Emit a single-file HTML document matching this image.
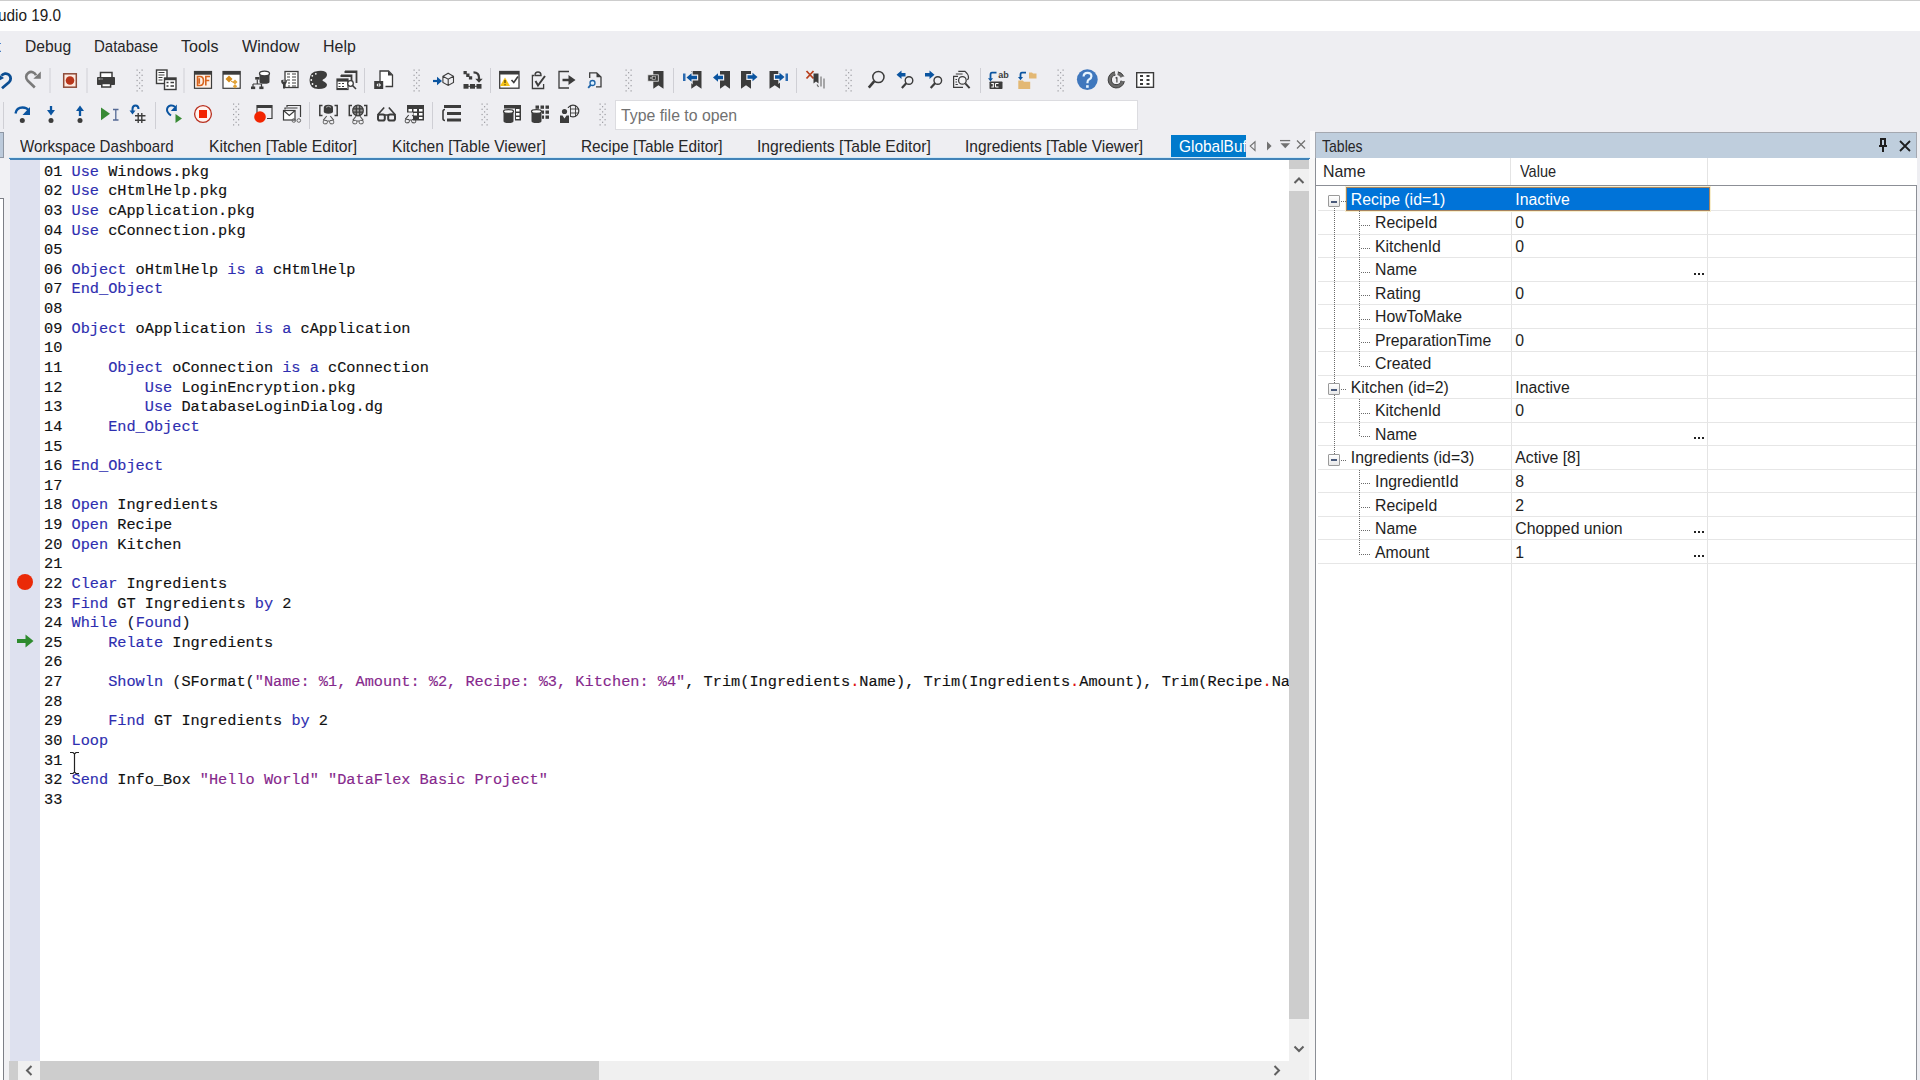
<!DOCTYPE html>
<html><head><meta charset="utf-8"><style>
*{box-sizing:border-box;margin:0;padding:0}
html,body{width:1920px;height:1080px;overflow:hidden;background:#eeeef2;font-family:"Liberation Sans",sans-serif;color:#1e1e1e;position:relative}
.a{position:absolute}
.u{position:absolute;white-space:pre;font-size:16.6px;line-height:30px;transform-origin:0 0;color:#262628}
.code{position:absolute;left:44px;white-space:pre;font-family:"Liberation Mono",monospace;font-size:15.27px;line-height:19.63px;color:#111;-webkit-text-stroke:0.15px currentColor}
.k{color:#2e2eb0}.s{color:#86288c}.d{color:#e01010}
.row{position:absolute;left:1318px;width:598px;height:1px;background:#e6e6e6}
.tn{position:absolute;white-space:pre;font-size:15.8px;line-height:30px;color:#1e1e1e}
.dotv{position:absolute;width:1px;background:repeating-linear-gradient(to bottom,#6a6a6a 0 1px,transparent 1px 2px)}
.doth{position:absolute;height:1px;background:repeating-linear-gradient(to right,#6a6a6a 0 1px,transparent 1px 2px)}
</style></head><body>
<div class="a" style="left:0;top:0;width:1920px;height:31px;background:#fff;border-top:1px solid #cdcdcd"></div>
<div class="u" style="left:-2.42px;top:0.80px;transform:scaleX(0.9239);color:#1a1a1a">udio 19.0</div>
<div class="u" style="left:-3.50px;top:32.40px;transform:scaleX(0.8000);color:#262628">t</div>
<div class="u" style="left:24.86px;top:32.40px;transform:scaleX(0.9426);color:#262628">Debug</div>
<div class="u" style="left:94.10px;top:32.40px;transform:scaleX(0.9029);color:#262628">Database</div>
<div class="u" style="left:180.90px;top:32.40px;transform:scaleX(0.9658);color:#262628">Tools</div>
<div class="u" style="left:242.30px;top:32.40px;transform:scaleX(0.9746);color:#262628">Window</div>
<div class="u" style="left:323.04px;top:32.40px;transform:scaleX(0.9606);color:#262628">Help</div>
<svg class="a" style="left:0;top:60px" width="1200" height="75" viewBox="0 60 1200 75"><rect x="49.5" y="68" width="1" height="25" fill="#cfcfd5"/><rect x="86.5" y="68" width="1" height="25" fill="#cfcfd5"/><rect x="183.5" y="68" width="1" height="25" fill="#cfcfd5"/><rect x="364.0" y="68" width="1" height="25" fill="#cfcfd5"/><rect x="490.0" y="68" width="1" height="25" fill="#cfcfd5"/><rect x="673.0" y="68" width="1" height="25" fill="#cfcfd5"/><rect x="796.0" y="68" width="1" height="25" fill="#cfcfd5"/><rect x="980.0" y="68" width="1" height="25" fill="#cfcfd5"/><rect x="3.0" y="102" width="1" height="27" fill="#cfcfd5"/><rect x="155.0" y="102" width="1" height="27" fill="#cfcfd5"/><rect x="309.0" y="102" width="1" height="27" fill="#cfcfd5"/><rect x="432.0" y="102" width="1" height="27" fill="#cfcfd5"/><rect x="136.5" y="69.5" width="1.2" height="1.2" fill="#9a9aa0"/><rect x="141.5" y="69.5" width="1.2" height="1.2" fill="#9a9aa0"/><rect x="136.5" y="74.7" width="1.2" height="1.2" fill="#9a9aa0"/><rect x="141.5" y="74.7" width="1.2" height="1.2" fill="#9a9aa0"/><rect x="136.5" y="79.9" width="1.2" height="1.2" fill="#9a9aa0"/><rect x="141.5" y="79.9" width="1.2" height="1.2" fill="#9a9aa0"/><rect x="136.5" y="85.1" width="1.2" height="1.2" fill="#9a9aa0"/><rect x="141.5" y="85.1" width="1.2" height="1.2" fill="#9a9aa0"/><rect x="136.5" y="90.3" width="1.2" height="1.2" fill="#9a9aa0"/><rect x="141.5" y="90.3" width="1.2" height="1.2" fill="#9a9aa0"/><rect x="139.0" y="72.1" width="1.2" height="1.2" fill="#9a9aa0"/><rect x="139.0" y="77.3" width="1.2" height="1.2" fill="#9a9aa0"/><rect x="139.0" y="82.5" width="1.2" height="1.2" fill="#9a9aa0"/><rect x="139.0" y="87.69999999999999" width="1.2" height="1.2" fill="#9a9aa0"/><rect x="413.5" y="69.5" width="1.2" height="1.2" fill="#9a9aa0"/><rect x="418.5" y="69.5" width="1.2" height="1.2" fill="#9a9aa0"/><rect x="413.5" y="74.7" width="1.2" height="1.2" fill="#9a9aa0"/><rect x="418.5" y="74.7" width="1.2" height="1.2" fill="#9a9aa0"/><rect x="413.5" y="79.9" width="1.2" height="1.2" fill="#9a9aa0"/><rect x="418.5" y="79.9" width="1.2" height="1.2" fill="#9a9aa0"/><rect x="413.5" y="85.1" width="1.2" height="1.2" fill="#9a9aa0"/><rect x="418.5" y="85.1" width="1.2" height="1.2" fill="#9a9aa0"/><rect x="413.5" y="90.3" width="1.2" height="1.2" fill="#9a9aa0"/><rect x="418.5" y="90.3" width="1.2" height="1.2" fill="#9a9aa0"/><rect x="416.0" y="72.1" width="1.2" height="1.2" fill="#9a9aa0"/><rect x="416.0" y="77.3" width="1.2" height="1.2" fill="#9a9aa0"/><rect x="416.0" y="82.5" width="1.2" height="1.2" fill="#9a9aa0"/><rect x="416.0" y="87.69999999999999" width="1.2" height="1.2" fill="#9a9aa0"/><rect x="625.5" y="69.5" width="1.2" height="1.2" fill="#9a9aa0"/><rect x="630.5" y="69.5" width="1.2" height="1.2" fill="#9a9aa0"/><rect x="625.5" y="74.7" width="1.2" height="1.2" fill="#9a9aa0"/><rect x="630.5" y="74.7" width="1.2" height="1.2" fill="#9a9aa0"/><rect x="625.5" y="79.9" width="1.2" height="1.2" fill="#9a9aa0"/><rect x="630.5" y="79.9" width="1.2" height="1.2" fill="#9a9aa0"/><rect x="625.5" y="85.1" width="1.2" height="1.2" fill="#9a9aa0"/><rect x="630.5" y="85.1" width="1.2" height="1.2" fill="#9a9aa0"/><rect x="625.5" y="90.3" width="1.2" height="1.2" fill="#9a9aa0"/><rect x="630.5" y="90.3" width="1.2" height="1.2" fill="#9a9aa0"/><rect x="628.0" y="72.1" width="1.2" height="1.2" fill="#9a9aa0"/><rect x="628.0" y="77.3" width="1.2" height="1.2" fill="#9a9aa0"/><rect x="628.0" y="82.5" width="1.2" height="1.2" fill="#9a9aa0"/><rect x="628.0" y="87.69999999999999" width="1.2" height="1.2" fill="#9a9aa0"/><rect x="845.5" y="69.5" width="1.2" height="1.2" fill="#9a9aa0"/><rect x="850.5" y="69.5" width="1.2" height="1.2" fill="#9a9aa0"/><rect x="845.5" y="74.7" width="1.2" height="1.2" fill="#9a9aa0"/><rect x="850.5" y="74.7" width="1.2" height="1.2" fill="#9a9aa0"/><rect x="845.5" y="79.9" width="1.2" height="1.2" fill="#9a9aa0"/><rect x="850.5" y="79.9" width="1.2" height="1.2" fill="#9a9aa0"/><rect x="845.5" y="85.1" width="1.2" height="1.2" fill="#9a9aa0"/><rect x="850.5" y="85.1" width="1.2" height="1.2" fill="#9a9aa0"/><rect x="845.5" y="90.3" width="1.2" height="1.2" fill="#9a9aa0"/><rect x="850.5" y="90.3" width="1.2" height="1.2" fill="#9a9aa0"/><rect x="848.0" y="72.1" width="1.2" height="1.2" fill="#9a9aa0"/><rect x="848.0" y="77.3" width="1.2" height="1.2" fill="#9a9aa0"/><rect x="848.0" y="82.5" width="1.2" height="1.2" fill="#9a9aa0"/><rect x="848.0" y="87.69999999999999" width="1.2" height="1.2" fill="#9a9aa0"/><rect x="1057.5" y="69.5" width="1.2" height="1.2" fill="#9a9aa0"/><rect x="1062.5" y="69.5" width="1.2" height="1.2" fill="#9a9aa0"/><rect x="1057.5" y="74.7" width="1.2" height="1.2" fill="#9a9aa0"/><rect x="1062.5" y="74.7" width="1.2" height="1.2" fill="#9a9aa0"/><rect x="1057.5" y="79.9" width="1.2" height="1.2" fill="#9a9aa0"/><rect x="1062.5" y="79.9" width="1.2" height="1.2" fill="#9a9aa0"/><rect x="1057.5" y="85.1" width="1.2" height="1.2" fill="#9a9aa0"/><rect x="1062.5" y="85.1" width="1.2" height="1.2" fill="#9a9aa0"/><rect x="1057.5" y="90.3" width="1.2" height="1.2" fill="#9a9aa0"/><rect x="1062.5" y="90.3" width="1.2" height="1.2" fill="#9a9aa0"/><rect x="1060.0" y="72.1" width="1.2" height="1.2" fill="#9a9aa0"/><rect x="1060.0" y="77.3" width="1.2" height="1.2" fill="#9a9aa0"/><rect x="1060.0" y="82.5" width="1.2" height="1.2" fill="#9a9aa0"/><rect x="1060.0" y="87.69999999999999" width="1.2" height="1.2" fill="#9a9aa0"/><rect x="233" y="103.5" width="1.2" height="1.2" fill="#9a9aa0"/><rect x="238" y="103.5" width="1.2" height="1.2" fill="#9a9aa0"/><rect x="233" y="108.7" width="1.2" height="1.2" fill="#9a9aa0"/><rect x="238" y="108.7" width="1.2" height="1.2" fill="#9a9aa0"/><rect x="233" y="113.9" width="1.2" height="1.2" fill="#9a9aa0"/><rect x="238" y="113.9" width="1.2" height="1.2" fill="#9a9aa0"/><rect x="233" y="119.1" width="1.2" height="1.2" fill="#9a9aa0"/><rect x="238" y="119.1" width="1.2" height="1.2" fill="#9a9aa0"/><rect x="233" y="124.3" width="1.2" height="1.2" fill="#9a9aa0"/><rect x="238" y="124.3" width="1.2" height="1.2" fill="#9a9aa0"/><rect x="235.5" y="106.1" width="1.2" height="1.2" fill="#9a9aa0"/><rect x="235.5" y="111.3" width="1.2" height="1.2" fill="#9a9aa0"/><rect x="235.5" y="116.5" width="1.2" height="1.2" fill="#9a9aa0"/><rect x="235.5" y="121.69999999999999" width="1.2" height="1.2" fill="#9a9aa0"/><rect x="481.5" y="103.5" width="1.2" height="1.2" fill="#9a9aa0"/><rect x="486.5" y="103.5" width="1.2" height="1.2" fill="#9a9aa0"/><rect x="481.5" y="108.7" width="1.2" height="1.2" fill="#9a9aa0"/><rect x="486.5" y="108.7" width="1.2" height="1.2" fill="#9a9aa0"/><rect x="481.5" y="113.9" width="1.2" height="1.2" fill="#9a9aa0"/><rect x="486.5" y="113.9" width="1.2" height="1.2" fill="#9a9aa0"/><rect x="481.5" y="119.1" width="1.2" height="1.2" fill="#9a9aa0"/><rect x="486.5" y="119.1" width="1.2" height="1.2" fill="#9a9aa0"/><rect x="481.5" y="124.3" width="1.2" height="1.2" fill="#9a9aa0"/><rect x="486.5" y="124.3" width="1.2" height="1.2" fill="#9a9aa0"/><rect x="484.0" y="106.1" width="1.2" height="1.2" fill="#9a9aa0"/><rect x="484.0" y="111.3" width="1.2" height="1.2" fill="#9a9aa0"/><rect x="484.0" y="116.5" width="1.2" height="1.2" fill="#9a9aa0"/><rect x="484.0" y="121.69999999999999" width="1.2" height="1.2" fill="#9a9aa0"/><rect x="599.5" y="103.5" width="1.2" height="1.2" fill="#9a9aa0"/><rect x="604.5" y="103.5" width="1.2" height="1.2" fill="#9a9aa0"/><rect x="599.5" y="108.7" width="1.2" height="1.2" fill="#9a9aa0"/><rect x="604.5" y="108.7" width="1.2" height="1.2" fill="#9a9aa0"/><rect x="599.5" y="113.9" width="1.2" height="1.2" fill="#9a9aa0"/><rect x="604.5" y="113.9" width="1.2" height="1.2" fill="#9a9aa0"/><rect x="599.5" y="119.1" width="1.2" height="1.2" fill="#9a9aa0"/><rect x="604.5" y="119.1" width="1.2" height="1.2" fill="#9a9aa0"/><rect x="599.5" y="124.3" width="1.2" height="1.2" fill="#9a9aa0"/><rect x="604.5" y="124.3" width="1.2" height="1.2" fill="#9a9aa0"/><rect x="602.0" y="106.1" width="1.2" height="1.2" fill="#9a9aa0"/><rect x="602.0" y="111.3" width="1.2" height="1.2" fill="#9a9aa0"/><rect x="602.0" y="116.5" width="1.2" height="1.2" fill="#9a9aa0"/><rect x="602.0" y="121.69999999999999" width="1.2" height="1.2" fill="#9a9aa0"/><path d="M2 88.3 L9 82.3 A5 5 0 1 0 1.5 75.8" stroke="#0b4d92" stroke-width="2.8" fill="none"/><path d="M-2.5 73.5 L4 78 L-2.5 81.5 Z" fill="#0b4d92"/><path d="M34.8 87.5 L27.8 80.8 A5.1 5.1 0 1 1 36 75.2" stroke="#7a7a7a" stroke-width="2.6" fill="none"/><path d="M40.8 71.5 L40.8 78.8 L33.3 78.8 Z" fill="#7a7a7a"/><rect x="63.7" y="73.8" width="12.6" height="13.4" fill="#fde9df" stroke="#8e4a38" stroke-width="1.5"/><circle cx="70" cy="80.5" r="4.3" fill="#b8351a"/><rect x="100.5" y="72.5" width="11.5" height="5.5" fill="#fff" stroke="#3c3c3c" stroke-width="1.5"/><rect x="97" y="77" width="18" height="8" rx="0.8" fill="#3c3c3c"/><rect x="101.8" y="83.5" width="8.8" height="3.5" fill="#fff" stroke="#3c3c3c" stroke-width="1.5"/><rect x="98.5" y="78.5" width="2" height="1" fill="#ddd"/><rect x="101.5" y="78.5" width="1" height="1" fill="#ddd"/><rect x="156.5" y="70" width="10.5" height="13.5" fill="#fff" stroke="#3c3c3c" stroke-width="1.4"/><path d="M158.5 72.5h6M158.5 75h6M158.5 77.5h4M158.5 80h4" stroke="#3c3c3c" stroke-width="1"/><rect x="164.5" y="78" width="11.5" height="11.5" fill="#fff" stroke="#3c3c3c" stroke-width="1.4"/><rect x="164.5" y="78" width="11.5" height="2.2" fill="#3c3c3c"/><path d="M166.5 82.5h2M170.5 82.5h3.5M166.5 86h2M170.5 86h3.5" stroke="#3c3c3c" stroke-width="1.6"/><rect x="194.5" y="71.5" width="17" height="16.8" fill="#fdf1e8" stroke="#3c3c3c" stroke-width="1.2"/><rect x="194.5" y="71.5" width="17" height="3.2" fill="#3c3c3c"/><path d="M197.5 76.5h2.5q3.5 0 3.5 4.5t-3.5 4.5h-2.5zM199.3 78.3v5.4" fill="none" stroke="#d8641e" stroke-width="1.6"/><path d="M205 76.5h5M205.8 76.5v9M205.8 80.5h3.5" fill="none" stroke="#d8641e" stroke-width="1.6"/><rect x="223" y="71.5" width="17.2" height="16.8" fill="#fff" stroke="#3c3c3c" stroke-width="1.2"/><rect x="223" y="71.5" width="17.2" height="3.2" fill="#3c3c3c"/><path d="M229 75.5l3.5 3.5-3.5 3.5-3.5-3.5z" fill="#d48c1c"/><path d="M235 79.5l2.5 2.5-2.5 2.5-2.5-2.5zM235 84l2.2 2.2-2.2 2.2-2.2-2.2z" fill="#e2a43a"/><path d="M231 81l2.5 1.5" stroke="#d48c1c" stroke-width="1"/><path d="M259.5 73.5v8.5q0 1.8 5 1.8t5-1.8v-8.5" fill="#3c3c3c"/><ellipse cx="264.5" cy="73.5" rx="5" ry="2.3" fill="#fff" stroke="#3c3c3c" stroke-width="1.3"/><rect x="255.2" y="77" width="4.3" height="2.6" fill="#3c3c3c"/><path d="M257.3 79.5v4.2M253 84h8.7M253 84v3M261.5 84v3" stroke="#3c3c3c" stroke-width="1.2" fill="none"/><rect x="251" y="86.5" width="4.2" height="2.6" fill="#3c3c3c"/><rect x="259.3" y="86.5" width="4.2" height="2.6" fill="#3c3c3c"/><rect x="285" y="71.5" width="13" height="16" fill="#fff" stroke="#3c3c3c" stroke-width="1.3"/><path d="M287 74h3M292 74h4M287 77h3M292 77h4M287 80h3M292 80h4M288 83h2M292 83h4M288 86h2M292 86h4" stroke="#3c3c3c" stroke-width="1.2"/><path d="M281 80.5q0 3 2 4v4h2v-4q2-1 2-4l-1.5-1v2.5h-2v-2.5z" fill="#3c3c3c"/><path d="M318 71q8.5-1 9 3.5q0 3-4 5q-1.2.8 0 1.6q4 1.8 4 4q-.5 4-8.5 4q-9 0-9-9q0-8.5 8.5-9.1z" fill="#3c3c3c"/><circle cx="315.8" cy="73.8" r="0.9" fill="#fff"/><circle cx="312.3" cy="75.8" r="0.9" fill="#fff"/><circle cx="311.3" cy="80" r="0.9" fill="#fff"/><circle cx="312.5" cy="84" r="0.9" fill="#fff"/><circle cx="316" cy="86" r="0.9" fill="#fff"/><path d="M345 71.5h11.5v11.5M341 75.5h10.5v7" fill="none" stroke="#3c3c3c" stroke-width="1.8"/><path d="M344.5 71h12v2h-12zM340.5 75h11v2h-11z" fill="#3c3c3c"/><rect x="337" y="79" width="11" height="10.5" fill="#fff" stroke="#3c3c3c" stroke-width="1.2"/><rect x="337" y="79" width="11" height="2.6" fill="#3c3c3c"/><path d="M338.5 83.5h2M342 83.5h2M338.5 86.5h2M342 86.5h2M337 88.5h10" stroke="#3c3c3c" stroke-width="1.2"/><circle cx="350.5" cy="83.5" r="2.8" fill="#fff" stroke="#3c3c3c" stroke-width="1.3"/><path d="M352.5 85.5l3.5 3.5" stroke="#3c3c3c" stroke-width="1.6"/><path d="M380 81v-10h8.5l4 4v11.5h-7" fill="#fff" stroke="#3c3c3c" stroke-width="1.3"/><path d="M388 71v4.5h4.5z" fill="#3c3c3c"/><rect x="374.2" y="81" width="9" height="8" fill="#3c3c3c"/><path d="M376.5 85l1.8-2v4zM381 85l-1.8-2v4z" fill="#fff"/><path d="M433 81h5" stroke="#0a54a0" stroke-width="2.2"/><path d="M437 76.8l5 4.2-5 4.2z" fill="#0a54a0"/><path d="M448.2 73.2l5.3 3v6.2l-5.3 3-5.3-3v-6.2zM442.9 76.2l5.3 3 5.3-3M448.2 79.2v6.2" fill="none" stroke="#3c3c3c" stroke-width="1.1"/><path d="M463.5 71h3.3v3.3h-3.3zM466.2 73.6h3.3v3.3h-3.3zM468.9 76.2h3.3v3.3h-3.3z" fill="#3c3c3c"/><path d="M473.5 72.3q5.5 0 5.5 5.5v2" fill="none" stroke="#3c3c3c" stroke-width="2.2"/><path d="M475.3 78.8h7.4l-3.7 4z" fill="#3c3c3c"/><rect x="463.5" y="84" width="5" height="4.7" fill="#3c3c3c"/><rect x="470" y="84" width="5" height="4.7" fill="#3c3c3c"/><rect x="476.5" y="84" width="5" height="4.7" fill="#3c3c3c"/><path d="M468 86.3h9" stroke="#3c3c3c" stroke-width="1"/><rect x="499.7" y="71.5" width="19.3" height="16.7" fill="#fff" stroke="#3c3c3c" stroke-width="1.3"/><rect x="499.7" y="71.5" width="19.3" height="3" fill="#3c3c3c"/><path d="M505 77.5l5 8.5h-10z" fill="#f4c21a"/><path d="M505 80v3M505 84.2v1" stroke="#3a2a00" stroke-width="1.1"/><path d="M511.5 80l2.3 2.5 4.2-6" fill="none" stroke="#3c3c3c" stroke-width="1.6"/><path d="M534 75.5h-1.6v13h11.2v-4.5M532.4 75.5" fill="none" stroke="#3c3c3c" stroke-width="1.3"/><path d="M535 75.5q0-3.5 3-3.5t3 3.5z" fill="none" stroke="#3c3c3c" stroke-width="1.4"/><path d="M535.5 81l2.5 4.5 7-9.5" fill="none" stroke="#3c3c3c" stroke-width="2"/><path d="M569 71.5h-10v16.5h10" fill="none" stroke="#3c3c3c" stroke-width="1.3"/><path d="M562.5 80h7" stroke="#3c3c3c" stroke-width="2.5"/><path d="M568.5 75l7 5-7 5z" fill="#3c3c3c"/><path d="M589.7 78v-5.2h7l4.3 4.3v9.8h-5" fill="none" stroke="#3c3c3c" stroke-width="1.3"/><path d="M596.5 72.8v4.5h4.5z" fill="#3c3c3c"/><circle cx="592.5" cy="83" r="2.5" fill="#dff2ff" stroke="#1f64a8" stroke-width="1.3"/><path d="M590.8 84.8l-2.6 3" stroke="#1f64a8" stroke-width="1.8"/><path d="M653.3 71h10.200000000000045v17.75l-5.100000000000023 -3.5l-5.100000000000023 3.5z" fill="#3c3c3c"/><rect x="647.8" y="74.8" width="10.5" height="6.4" fill="#3c3c3c" stroke="#e8e8ea" stroke-width="0.8"/><path d="M650 78l1.5-1.5v3z" fill="#ddd"/><rect x="652.5" y="76.5" width="3" height="3" fill="none" stroke="#ccc" stroke-width="0.6"/><path d="M691.3 71h10.200000000000045v17.75l-5.100000000000023 -3.5l-5.100000000000023 3.5z" fill="#3c3c3c"/><path d="M686.5 77.5l5 -4.3v2.6h5.5v3.4h-5.5v2.6z" fill="#eeeef2" stroke="#eeeef2" stroke-width="2.4"/><path d="M686.5 77.5l5 -4.3v2.6h5.5v3.4h-5.5v2.6z" fill="#0a54a0"/><rect x="683" y="73.5" width="2.5" height="7.5" fill="#2a6ab0"/><path d="M720 71h10v17.75l-5.0 -3.5l-5.0 3.5z" fill="#3c3c3c"/><path d="M713 77.5l5 -4.3v2.6h5v3.4h-5v2.6z" fill="#eeeef2" stroke="#eeeef2" stroke-width="2.4"/><path d="M713 77.5l5 -4.3v2.6h5v3.4h-5v2.6z" fill="#0a54a0"/><path d="M741 71h10v17.75l-5.0 -3.5l-5.0 3.5z" fill="#3c3c3c"/><path d="M757.5 77l-5 -4.3v2.6h-5.0v3.4h5.0v2.6z" fill="#eeeef2" stroke="#eeeef2" stroke-width="2.4"/><path d="M757.5 77l-5 -4.3v2.6h-5.0v3.4h5.0v2.6z" fill="#0a54a0"/><path d="M769.5 71h10.5v17.75l-5.25 -3.5l-5.25 3.5z" fill="#3c3c3c"/><path d="M784.5 77l-5 -4.3v2.6h-4.5v3.4h4.5v2.6z" fill="#eeeef2" stroke="#eeeef2" stroke-width="2.4"/><path d="M784.5 77l-5 -4.3v2.6h-4.5v3.4h4.5v2.6z" fill="#0a54a0"/><rect x="785.5" y="73.5" width="2.5" height="7.5" fill="#2a6ab0"/><path d="M806.5 71l7 7.5M813.5 71l-7 7.5" stroke="#b8401e" stroke-width="1.8"/><path d="M813.5 73.5h5v10l-2.5-2-2.5 2z" fill="#3c3c3c"/><path d="M821 76.5v10M824 78.5v10" stroke="#777" stroke-width="1.2"/><path d="M817 84.5l1.5 2.5" stroke="#666" stroke-width="1.2"/><circle cx="878.4" cy="77" r="5.6" fill="none" stroke="#3c3c3c" stroke-width="1.5"/><path d="M874.3 81.2l-5.5 6.5" stroke="#3c3c3c" stroke-width="2.6"/><path d="M896.5 74.7l5 -4.3v2.6h4.0v3.4h-4.0v2.6z" fill="#eeeef2" stroke="#eeeef2" stroke-width="2.4"/><path d="M896.5 74.7l5 -4.3v2.6h4.0v3.4h-4.0v2.6z" fill="#0a54a0"/><circle cx="909" cy="80.5" r="3.8" fill="none" stroke="#3c3c3c" stroke-width="1.4"/><path d="M906.2 83.3l-4.3 4.8" stroke="#3c3c3c" stroke-width="2.2"/><path d="M934.5 74.7l-5 -4.3v2.6h-4.5v3.4h4.5v2.6z" fill="#eeeef2" stroke="#eeeef2" stroke-width="2.4"/><path d="M934.5 74.7l-5 -4.3v2.6h-4.5v3.4h4.5v2.6z" fill="#0a54a0"/><circle cx="937.8" cy="80.5" r="3.8" fill="none" stroke="#3c3c3c" stroke-width="1.4"/><path d="M935.0 83.3l-4.3 4.8" stroke="#3c3c3c" stroke-width="2.2"/><path d="M958.3 71.4h6.7q3.5 3 3.5 6q0 1.5-1.2 2.5M955.8 74h6.8M958 76.3h-4.4v11.1h9.4" fill="none" stroke="#3c3c3c" stroke-width="1.2"/><path d="M955.5 79.5h1.5M955.5 82h1.5M955.5 84.5h2.3" stroke="#3c3c3c" stroke-width="1"/><circle cx="962.4" cy="80.4" r="3.8" fill="#f4f4f6" stroke="#3c3c3c" stroke-width="1.3"/><path d="M965.3 83.4l4.3 4.8" stroke="#3c3c3c" stroke-width="2"/><path d="M996.5 72.7h-4.5q-1.5 0-1.5 2v4" fill="none" stroke="#0a54a0" stroke-width="1.8"/><path d="M988 78.2h5l-2.5 3.2z" fill="#0a54a0"/><text x="998.3" y="77.5" style="font-family:'Liberation Sans';font-weight:bold;font-size:9px" fill="#3c3c3c">ab</text><rect x="989.5" y="81.5" width="13" height="7.5" rx="0.8" fill="#3c3c3c"/><path d="M991.3 83.5h2v3.5h-2M995.5 83.5h3M995.5 87h3M995.5 83.5v3.5" fill="none" stroke="#fff" stroke-width="1.1"/><path d="M1026 72.7h-4q-1.5 0-1.5 2v3" fill="none" stroke="#0a54a0" stroke-width="1.8"/><path d="M1018 77h5l-2.5 3.2z" fill="#0a54a0"/><path d="M1029 72.5h3l1 1h3.5v5h-7.5z" fill="#e3b874"/><path d="M1018.3 80.5h4.5l1.2 1.2h6.2v7.2h-11.9z" fill="#e3b874"/><circle cx="1087.3" cy="79.6" r="10.4" fill="#3f77bd"/><path d="M1083.6 76.4q0-3.6 3.9-3.6t3.9 3.4q0 2-2.4 3.2q-1.5.8-1.5 3v.8" fill="none" stroke="#e6f4ff" stroke-width="2.2"/><rect x="1086.1" y="85.2" width="2.6" height="2.6" fill="#e6f4ff"/><path d="M1115.17 73.4A6.5 6.5 0 1 0 1122.7 80.93" fill="none" stroke="#6a6a6a" stroke-width="3.4"/><path d="M1117.65 73.44A6.5 6.5 0 0 1 1122.19 77.05" fill="none" stroke="#6a6a6a" stroke-width="3.4"/><path d="M1114.9 71.7A8.2 8.2 0 1 0 1124.4 81.3M1115.5 75.1A4.8 4.8 0 1 0 1121 80.6M1117.9 71.8A8.2 8.2 0 0 1 1123.8 76.5" fill="none" stroke="#333" stroke-width="0.9"/><path d="M1116.9 77.3v5.2M1115.6 78.3l1.3-1" stroke="#444" stroke-width="1.2" fill="none"/><rect x="1136.7" y="72.7" width="16.8" height="14.6" fill="#fff" stroke="#3c3c3c" stroke-width="1.4"/><path d="M1140 76h3M1146.5 76h3M1140 80h3M1146.5 80h3M1140 84h3M1146.5 84h3" stroke="#3c3c3c" stroke-width="1.8"/><path d="M15.5 113.5q1-6 7-6q4.5 0 6 3" fill="none" stroke="#0a54a0" stroke-width="2.3"/><path d="M30 107l0 8h-7.5z" fill="#0a54a0"/><circle cx="22.3" cy="120.5" r="2.5" fill="#3c3c3c"/><path d="M51 106v5" stroke="#0a54a0" stroke-width="2.3"/><path d="M47 110l4 5.5 4-5.5z" fill="#0a54a0"/><circle cx="51" cy="120.5" r="2.5" fill="#3c3c3c"/><path d="M80 110v6" stroke="#0a54a0" stroke-width="2.3"/><path d="M76 111l4-5.5 4 5.5z" fill="#0a54a0"/><circle cx="80" cy="120.5" r="2.5" fill="#3c3c3c"/><path d="M101 107.5l9 6.3-9 6.4z" fill="#388a34"/><path d="M113 109.5h5.5M113 120h5.5M115.8 109.5v10.5" stroke="#556a95" stroke-width="1.3"/><path d="M138.5 109q0-3.5-3-3.5t-3 3.5v3" fill="none" stroke="#0a54a0" stroke-width="2"/><path d="M129.5 110.5h6l-3 4z" fill="#0a54a0"/><path d="M138.2 113v10M141.8 113v10M135 115.8h10.5M135 120.2h10.5" stroke="#3c3c3c" stroke-width="1.4"/><path d="M171 115.5q-4-3-4-5.5q0-3.5 3.5-4.5q3-.5 4.5 1.5" fill="none" stroke="#0a54a0" stroke-width="2"/><path d="M176.8 104.5v6.5h-6z" fill="#0a54a0"/><path d="M175.5 114l6.5 4.5-6.5 4.5z" fill="#388a34"/><circle cx="203" cy="114" r="8.4" fill="#fff4f0" stroke="#b83020" stroke-width="1.3"/><rect x="199" y="110" width="8" height="8" fill="#f22400"/><path d="M257 118.5v-13h15v13h-5" fill="none" stroke="#3c3c3c" stroke-width="1.2"/><rect x="257" y="105" width="15" height="3" fill="#3c3c3c"/><circle cx="260" cy="117" r="5.8" fill="#f22400"/><path d="M287 107v-1.5h13.5v11.5M285 109.5v-1.5h12.5" fill="none" stroke="#3c3c3c" stroke-width="1.2"/><rect x="283.5" y="110.5" width="11.5" height="9.5" fill="#fff" stroke="#3c3c3c" stroke-width="1.2"/><path d="M283.5 110.5l5.8 5 5.8-5" fill="none" stroke="#3c3c3c" stroke-width="1.2"/><circle cx="293.8" cy="120.5" r="1.8" fill="none" stroke="#666" stroke-width="1"/><circle cx="298.8" cy="120.5" r="1.8" fill="none" stroke="#666" stroke-width="1"/><path d="M322.5 105.5h-2.7v10h2.7M334.5 105.5h2.7v10h-2.7" fill="none" stroke="#3c3c3c" stroke-width="1.5"/><path d="M323.8 107.5q0-2.5 4.5-2.8q4.7 0 4.7 2.8v4q0 2-4.6 2.2q-4.6-.2-4.6-2.2z" fill="#3c3c3c"/><path d="M326 107.3q2.5-2 5 0" stroke="#aaa" stroke-width="1" fill="none"/><rect x="323.3" y="120.4" width="4" height="3.4" rx="1.2" fill="none" stroke="#555" stroke-width="1"/><rect x="329.7" y="120.4" width="4" height="3.4" rx="1.2" fill="none" stroke="#555" stroke-width="1"/><path d="M323.2 120.4L326.7 116M333.8 120.4L330.3 116M327.3 121h2.4" stroke="#555" stroke-width="1.1"/><path d="M352 105.5h-2.7v10h2.7M364 105.5h2.7v10h-2.7" fill="none" stroke="#3c3c3c" stroke-width="1.5"/><circle cx="358" cy="110.5" r="5.3" fill="#999" stroke="#3c3c3c" stroke-width="1.2"/><path d="M356.3 105.3v10.4M359.7 105.3v10.4M352.8 108.8h10.4M352.8 112.2h10.4" stroke="#3c3c3c" stroke-width="1.2"/><rect x="352.8" y="120.4" width="4" height="3.4" rx="1.2" fill="none" stroke="#555" stroke-width="1"/><rect x="359.2" y="120.4" width="4" height="3.4" rx="1.2" fill="none" stroke="#555" stroke-width="1"/><path d="M352.7 120.4L356.2 116M363.3 120.4L359.8 116M356.8 121h2.4" stroke="#555" stroke-width="1.1"/><rect x="378" y="114.5" width="6.8" height="6" rx="1.8" fill="none" stroke="#3c3c3c" stroke-width="2"/><rect x="388.2" y="114.5" width="6.8" height="6" rx="1.8" fill="none" stroke="#3c3c3c" stroke-width="2"/><path d="M377.5 115L384.2 107.5M395.5 115L388.8 107.5M384 115h5" stroke="#3c3c3c" stroke-width="1.6" fill="none"/><rect x="407" y="105" width="17" height="15.5" fill="#3c3c3c"/><rect x="407" y="105" width="17" height="2.5" fill="#3c3c3c"/><path d="M408.5 109h3.5v2.5h-3.5zM413.5 109h3.5v2.5h-3.5zM419 109h3.5v2.5h-3.5zM413.5 113h3.5v2.5h-3.5zM419 113h3.5v2.5h-3.5zM419 117h3.5v2h-3.5z" fill="#fff"/><rect x="405" y="112.5" width="8" height="10" fill="#eeeef2"/><rect x="405.3" y="119.4" width="4" height="3.4" rx="1.2" fill="none" stroke="#3c3c3c" stroke-width="1"/><rect x="411.7" y="119.4" width="4" height="3.4" rx="1.2" fill="none" stroke="#3c3c3c" stroke-width="1"/><path d="M405.2 119.4L408.7 115M415.8 119.4L412.3 115M409.3 120h2.4" stroke="#3c3c3c" stroke-width="1.1"/><path d="M444 106.5h17M447 113.5h14M447 120h14" stroke="#3c3c3c" stroke-width="3"/><path d="M445 109.5q-2 0-2 2v7q0 2 2 2" fill="none" stroke="#3c3c3c" stroke-width="1.6"/><rect x="504" y="105" width="17" height="15.5" fill="#3c3c3c"/><path d="M516 109h3.5v2.5h-3.5zM516 113h3.5v2.5h-3.5zM516 117h3.5v2h-3.5z" fill="#fff"/><rect x="502" y="108.5" width="13" height="15" fill="#eeeef2"/><path d="M503.5 111.5v9.5q0 2 5 2t5-2v-9.5z" fill="#3c3c3c"/><ellipse cx="508.5" cy="111.5" rx="5" ry="1.8" fill="#fff" stroke="#3c3c3c" stroke-width="1.2"/><rect x="535.5" y="105.5" width="3.5" height="3.3" fill="#3c3c3c"/><rect x="535.5" y="110.5" width="3.5" height="3.3" fill="#3c3c3c"/><rect x="535.5" y="115.5" width="3.5" height="3.3" fill="#3c3c3c"/><rect x="540.5" y="105.5" width="3.5" height="3.3" fill="#3c3c3c"/><rect x="540.5" y="110.5" width="3.5" height="3.3" fill="#3c3c3c"/><rect x="540.5" y="115.5" width="3.5" height="3.3" fill="#3c3c3c"/><rect x="545.5" y="105.5" width="3.5" height="3.3" fill="#3c3c3c"/><rect x="545.5" y="110.5" width="3.5" height="3.3" fill="#3c3c3c"/><rect x="545.5" y="115.5" width="3.5" height="3.3" fill="#3c3c3c"/><rect x="530" y="109" width="12" height="15" fill="#eeeef2"/><path d="M531.5 111.5v9.5q0 2 5 2t5-2v-9.5z" fill="#3c3c3c"/><ellipse cx="536.5" cy="111.5" rx="5" ry="1.8" fill="#fff" stroke="#3c3c3c" stroke-width="1.2"/><circle cx="573" cy="111" r="5.8" fill="none" stroke="#3c3c3c" stroke-width="1.2"/><path d="M570.5 105.5v11M575.5 105.5v11M567.5 109h11M567.5 113h11" stroke="#3c3c3c" stroke-width="0.9"/><rect x="559" y="108" width="11" height="16" fill="#eeeef2"/><circle cx="564.5" cy="111.5" r="2.6" fill="#3c3c3c"/><path d="M560 115.5h2.5l2 3 2-3h2.5v7.5h-9z" fill="#3c3c3c"/></svg>
<div class="a" style="left:615px;top:100px;width:523px;height:30px;background:#fff;border:1px solid #dcdce0"></div>
<div class="u" style="left:620.80px;top:100.60px;transform:scaleX(0.9537);color:#717171">Type file to open</div>
<div class="a" style="left:-1px;top:132px;width:5px;height:26px;background:#bccadb;border:1px solid #8e97a4;border-left:none"></div>
<div class="u" style="left:20.30px;top:131.60px;transform:scaleX(0.9119);color:#262628">Workspace Dashboard</div>
<div class="u" style="left:209.36px;top:131.60px;transform:scaleX(0.9445);color:#262628">Kitchen [Table Editor]</div>
<div class="u" style="left:392.26px;top:131.60px;transform:scaleX(0.9383);color:#262628">Kitchen [Table Viewer]</div>
<div class="u" style="left:580.98px;top:131.60px;transform:scaleX(0.9245);color:#262628">Recipe [Table Editor]</div>
<div class="u" style="left:757.15px;top:131.60px;transform:scaleX(0.9467);color:#262628">Ingredients [Table Editor]</div>
<div class="u" style="left:965.47px;top:131.60px;transform:scaleX(0.9344);color:#262628">Ingredients [Table Viewer]</div>
<div class="a" style="left:1171px;top:135px;width:75px;height:24px;background:#007acc;overflow:hidden">
<div class="u" style="left:7.77px;top:-3.40px;transform:scaleX(0.93);color:#fff">GlobalBuffer</div></div>
<div class="a" style="left:9px;top:158px;width:1301px;height:2px;background:#4283b8;box-shadow:0 -1px 0 #d3eaf8"></div>
<svg class="a" style="left:1245px;top:136px" width="65" height="20" viewBox="1245 136 65 20">
<path d="M1255 141.8v8.6l-4.8-4.3z" fill="none" stroke="#717171" stroke-width="1.1"/>
<path d="M1267 141.5v9l4.6-4.5z" fill="#717171"/>
<path d="M1280 140.6h10.2" stroke="#717171" stroke-width="1.3"/><path d="M1280.5 143.2h9.5l-4.75 5z" fill="#717171"/>
<path d="M1297 140.5l8 8M1305 140.5l-8 8" stroke="#717171" stroke-width="1.3"/>
</svg>
<div class="a" style="left:0;top:159px;width:10px;height:921px;background:#f1f1f4"></div>
<div class="a" style="left:-1px;top:198px;width:5px;height:882px;background:#fff;border:1px solid #7d7f86;border-left:none;border-bottom:none"></div>
<div class="a" style="left:10px;top:160px;width:30.5px;height:901px;background:#dee1ef"></div>
<div class="a" style="left:40px;top:160px;width:1249px;height:901px;background:#fff"></div>
<div class="code" style="top:162.70px">01 <span class="k">Use</span> Windows.pkg</div>
<div class="code" style="top:182.33px">02 <span class="k">Use</span> cHtmlHelp.pkg</div>
<div class="code" style="top:201.96px">03 <span class="k">Use</span> cApplication.pkg</div>
<div class="code" style="top:221.59px">04 <span class="k">Use</span> cConnection.pkg</div>
<div class="code" style="top:241.22px">05</div>
<div class="code" style="top:260.85px">06 <span class="k">Object</span> oHtmlHelp <span class="k">is</span> <span class="k">a</span> cHtmlHelp</div>
<div class="code" style="top:280.48px">07 <span class="k">End_Object</span></div>
<div class="code" style="top:300.11px">08</div>
<div class="code" style="top:319.74px">09 <span class="k">Object</span> oApplication <span class="k">is</span> <span class="k">a</span> cApplication</div>
<div class="code" style="top:339.37px">10</div>
<div class="code" style="top:359.00px">11     <span class="k">Object</span> oConnection <span class="k">is</span> <span class="k">a</span> cConnection</div>
<div class="code" style="top:378.63px">12         <span class="k">Use</span> LoginEncryption.pkg</div>
<div class="code" style="top:398.26px">13         <span class="k">Use</span> DatabaseLoginDialog.dg</div>
<div class="code" style="top:417.89px">14     <span class="k">End_Object</span></div>
<div class="code" style="top:437.52px">15</div>
<div class="code" style="top:457.15px">16 <span class="k">End_Object</span></div>
<div class="code" style="top:476.78px">17</div>
<div class="code" style="top:496.41px">18 <span class="k">Open</span> Ingredients</div>
<div class="code" style="top:516.04px">19 <span class="k">Open</span> Recipe</div>
<div class="code" style="top:535.67px">20 <span class="k">Open</span> Kitchen</div>
<div class="code" style="top:555.30px">21</div>
<div class="code" style="top:574.93px">22 <span class="k">Clear</span> Ingredients</div>
<div class="code" style="top:594.56px">23 <span class="k">Find</span> GT Ingredients <span class="k">by</span> 2</div>
<div class="code" style="top:614.19px">24 <span class="k">While</span> (<span class="k">Found</span>)</div>
<div class="code" style="top:633.82px">25     <span class="k">Relate</span> Ingredients</div>
<div class="code" style="top:653.45px">26</div>
<div class="code" style="top:673.08px">27     <span class="k">Showln</span> (SFormat(<span class="s">&quot;Name: %1, Amount: %2, Recipe: %3, Kitchen: %4&quot;</span>, Trim(Ingredients<span class="d">.</span>Name), Trim(Ingredients<span class="d">.</span>Amount), Trim(Recipe<span class="d">.</span>Name), Trim(Kitchen<span class="d">.</span>Name)))</div>
<div class="code" style="top:692.71px">28</div>
<div class="code" style="top:712.34px">29     <span class="k">Find</span> GT Ingredients <span class="k">by</span> 2</div>
<div class="code" style="top:731.97px">30 <span class="k">Loop</span></div>
<div class="code" style="top:751.60px">31</div>
<div class="code" style="top:771.23px">32 <span class="k">Send</span> Info_Box <span class="s">&quot;Hello World&quot;</span> <span class="s">&quot;DataFlex Basic Project&quot;</span></div>
<div class="code" style="top:790.86px">33</div>
<div class="a" style="left:17px;top:574px;width:16px;height:16px;border-radius:50%;background:#ea2a08"></div>
<svg class="a" style="left:15px;top:632px" width="22" height="18" viewBox="0 0 22 18"><path d="M2 9h10" stroke="#2e8b2e" stroke-width="4"/><path d="M10.5 2.5l8 6.5-8 6.5z" fill="#2e8b2e"/></svg>
<svg class="a" style="left:68px;top:750px" width="14" height="26" viewBox="0 0 14 26"><path d="M2 2.5h3l1.5 1.5 1.5-1.5h3M6.5 4v18M2 23.5h3l1.5-1.5 1.5 1.5h3" fill="none" stroke="#222" stroke-width="1.2"/></svg>
<div class="a" style="left:1289px;top:160px;width:20px;height:901px;background:#f0f0f0"></div>
<div class="a" style="left:1289px;top:160px;width:20px;height:9px;background:#cdcdcd"></div>
<div class="a" style="left:1289px;top:191px;width:20px;height:828px;background:#cdcdcd"></div>
<div class="a" style="left:9px;top:1061px;width:1300px;height:19px;background:#f0f0f0"></div>
<div class="a" style="left:9px;top:1061px;width:9px;height:19px;background:#cdcdcd"></div>
<div class="a" style="left:40px;top:1061px;width:559px;height:19px;background:#cdcdcd"></div>
<div class="a" style="left:1309px;top:159px;width:6px;height:921px;background:#f7f7f7"></div>
<div class="a" style="left:1310px;top:131px;width:5px;height:28px;background:#f9f9fa"></div>
<svg class="a" style="left:1289px;top:170px" width="20" height="20" viewBox="0 0 20 20"><path d="M5.5 13l4.5-4.5 4.5 4.5" fill="none" stroke="#606060" stroke-width="2"/></svg>
<svg class="a" style="left:1289px;top:1039px" width="20" height="20" viewBox="0 0 20 20"><path d="M5.5 7.5l4.5 4.5 4.5-4.5" fill="none" stroke="#606060" stroke-width="2"/></svg>
<svg class="a" style="left:19px;top:1061px" width="20" height="19" viewBox="0 0 20 19"><path d="M12.5 5l-4.5 4.5 4.5 4.5" fill="none" stroke="#606060" stroke-width="2"/></svg>
<svg class="a" style="left:1267px;top:1061px" width="20" height="19" viewBox="0 0 20 19"><path d="M7.5 5l4.5 4.5-4.5 4.5" fill="none" stroke="#606060" stroke-width="2"/></svg>
<div class="a" style="left:1315px;top:132px;width:602px;height:948px;background:#fff;border-left:1px solid #8c8f96"></div>
<div class="a" style="left:1315px;top:132px;width:602px;height:26px;background:#bfcedd;border:1px solid #a4a8b0;border-bottom:none"></div>
<div class="u" style="left:1322.40px;top:131.60px;transform:scaleX(0.8458);color:#262628">Tables</div>
<svg class="a" style="left:1876px;top:138px" width="14" height="16" viewBox="0 0 14 16"><path d="M4 1h6M5 1v7M9 1v7M3 8h8M7 8v6" stroke="#1e1e1e" stroke-width="2" fill="none"/></svg>
<svg class="a" style="left:1898px;top:139px" width="14" height="14" viewBox="0 0 14 14"><path d="M2 2L12 12M12 2L2 12" stroke="#1e1e1e" stroke-width="1.8" fill="none"/></svg>
<div class="u" style="left:1322.84px;top:156.70px;transform:scaleX(0.9605);color:#262628">Name</div>
<div class="u" style="left:1520.10px;top:156.70px;transform:scaleX(0.8756);color:#262628">Value</div>
<div class="a" style="left:1510px;top:158px;width:1px;height:27px;background:#e4e4e4"></div>
<div class="a" style="left:1707px;top:158px;width:1px;height:27px;background:#e4e4e4"></div>
<div class="a" style="left:1315px;top:185px;width:602px;height:895px;border:1px solid #8c8f96;border-bottom:none"></div>
<div class="a" style="left:1511px;top:211px;width:1px;height:869px;background:#e4e4e4"></div>
<div class="a" style="left:1707px;top:211px;width:1px;height:869px;background:#e4e4e4"></div>
<div class="row" style="top:210.0px"></div>
<div class="a" style="left:1346px;top:187px;width:364px;height:24px;background:#0073d8;border:1px solid #a8845f;box-shadow:0 0 0 1px #f7eecd"></div>
<div class="tn" style="left:1350.8px;top:184.6px;color:#fff">Recipe (id=1)</div>
<div class="tn" style="left:1515.3px;top:184.6px;color:#fff">Inactive</div>
<div class="a" style="left:1328px;top:195.0px;width:12px;height:12px;border:1px solid #9a9a9a;border-radius:1px;background:linear-gradient(#fff,#e8e8e8)"></div>
<div class="a" style="left:1331px;top:200.5px;width:6px;height:2px;background:#4a5a7a"></div>
<div class="doth" style="left:1341px;top:201.0px;width:6px"></div>
<div class="row" style="top:233.5px"></div>
<div class="tn" style="left:1375.0px;top:208.1px;color:#1e1e1e">RecipeId</div>
<div class="tn" style="left:1515.3px;top:208.1px;color:#1e1e1e">0</div>
<div class="doth" style="left:1361px;top:224.5px;width:10px"></div>
<div class="row" style="top:257.1px"></div>
<div class="tn" style="left:1375.0px;top:231.7px;color:#1e1e1e">KitchenId</div>
<div class="tn" style="left:1515.3px;top:231.7px;color:#1e1e1e">0</div>
<div class="doth" style="left:1361px;top:248.1px;width:10px"></div>
<div class="row" style="top:280.6px"></div>
<div class="tn" style="left:1375.0px;top:255.2px;color:#1e1e1e">Name</div>
<div class="a" style="left:1693px;top:272.6px;width:11px;height:2px;background:radial-gradient(circle,#222 0.9px,transparent 1.1px) 0 0/4px 2px"></div>
<div class="doth" style="left:1361px;top:271.6px;width:10px"></div>
<div class="row" style="top:304.1px"></div>
<div class="tn" style="left:1375.0px;top:278.7px;color:#1e1e1e">Rating</div>
<div class="tn" style="left:1515.3px;top:278.7px;color:#1e1e1e">0</div>
<div class="doth" style="left:1361px;top:295.1px;width:10px"></div>
<div class="row" style="top:327.6px"></div>
<div class="tn" style="left:1375.0px;top:302.2px;color:#1e1e1e">HowToMake</div>
<div class="doth" style="left:1361px;top:318.6px;width:10px"></div>
<div class="row" style="top:351.2px"></div>
<div class="tn" style="left:1375.0px;top:325.8px;color:#1e1e1e">PreparationTime</div>
<div class="tn" style="left:1515.3px;top:325.8px;color:#1e1e1e">0</div>
<div class="doth" style="left:1361px;top:342.2px;width:10px"></div>
<div class="row" style="top:374.7px"></div>
<div class="tn" style="left:1375.0px;top:349.3px;color:#1e1e1e">Created</div>
<div class="doth" style="left:1361px;top:365.7px;width:10px"></div>
<div class="row" style="top:398.2px"></div>
<div class="tn" style="left:1350.8px;top:372.8px;color:#1e1e1e">Kitchen (id=2)</div>
<div class="tn" style="left:1515.3px;top:372.8px;color:#1e1e1e">Inactive</div>
<div class="a" style="left:1328px;top:383.2px;width:12px;height:12px;border:1px solid #9a9a9a;border-radius:1px;background:linear-gradient(#fff,#e8e8e8)"></div>
<div class="a" style="left:1331px;top:388.7px;width:6px;height:2px;background:#4a5a7a"></div>
<div class="doth" style="left:1341px;top:389.2px;width:6px"></div>
<div class="row" style="top:421.8px"></div>
<div class="tn" style="left:1375.0px;top:396.4px;color:#1e1e1e">KitchenId</div>
<div class="tn" style="left:1515.3px;top:396.4px;color:#1e1e1e">0</div>
<div class="doth" style="left:1361px;top:412.8px;width:10px"></div>
<div class="row" style="top:445.3px"></div>
<div class="tn" style="left:1375.0px;top:419.9px;color:#1e1e1e">Name</div>
<div class="a" style="left:1693px;top:437.3px;width:11px;height:2px;background:radial-gradient(circle,#222 0.9px,transparent 1.1px) 0 0/4px 2px"></div>
<div class="doth" style="left:1361px;top:436.3px;width:10px"></div>
<div class="row" style="top:468.8px"></div>
<div class="tn" style="left:1350.8px;top:443.4px;color:#1e1e1e">Ingredients (id=3)</div>
<div class="tn" style="left:1515.3px;top:443.4px;color:#1e1e1e">Active [8]</div>
<div class="a" style="left:1328px;top:453.8px;width:12px;height:12px;border:1px solid #9a9a9a;border-radius:1px;background:linear-gradient(#fff,#e8e8e8)"></div>
<div class="a" style="left:1331px;top:459.3px;width:6px;height:2px;background:#4a5a7a"></div>
<div class="doth" style="left:1341px;top:459.8px;width:6px"></div>
<div class="row" style="top:492.4px"></div>
<div class="tn" style="left:1375.0px;top:467.0px;color:#1e1e1e">IngredientId</div>
<div class="tn" style="left:1515.3px;top:467.0px;color:#1e1e1e">8</div>
<div class="doth" style="left:1361px;top:483.4px;width:10px"></div>
<div class="row" style="top:515.9px"></div>
<div class="tn" style="left:1375.0px;top:490.5px;color:#1e1e1e">RecipeId</div>
<div class="tn" style="left:1515.3px;top:490.5px;color:#1e1e1e">2</div>
<div class="doth" style="left:1361px;top:506.9px;width:10px"></div>
<div class="row" style="top:539.4px"></div>
<div class="tn" style="left:1375.0px;top:514.0px;color:#1e1e1e">Name</div>
<div class="tn" style="left:1515.3px;top:514.0px;color:#1e1e1e">Chopped union</div>
<div class="a" style="left:1693px;top:531.4px;width:11px;height:2px;background:radial-gradient(circle,#222 0.9px,transparent 1.1px) 0 0/4px 2px"></div>
<div class="doth" style="left:1361px;top:530.4px;width:10px"></div>
<div class="row" style="top:563.0px"></div>
<div class="tn" style="left:1375.0px;top:537.6px;color:#1e1e1e">Amount</div>
<div class="tn" style="left:1515.3px;top:537.6px;color:#1e1e1e">1</div>
<div class="a" style="left:1693px;top:555.0px;width:11px;height:2px;background:radial-gradient(circle,#222 0.9px,transparent 1.1px) 0 0/4px 2px"></div>
<div class="doth" style="left:1361px;top:554.0px;width:10px"></div>
<div class="dotv" style="left:1334px;top:208.0px;height:175.2px"></div>
<div class="dotv" style="left:1334px;top:395.2px;height:58.6px"></div>
<div class="dotv" style="left:1359px;top:211.0px;height:155.7px"></div>
<div class="dotv" style="left:1359px;top:399.2px;height:38.1px"></div>
<div class="dotv" style="left:1359px;top:469.8px;height:85.1px"></div>
</body></html>
